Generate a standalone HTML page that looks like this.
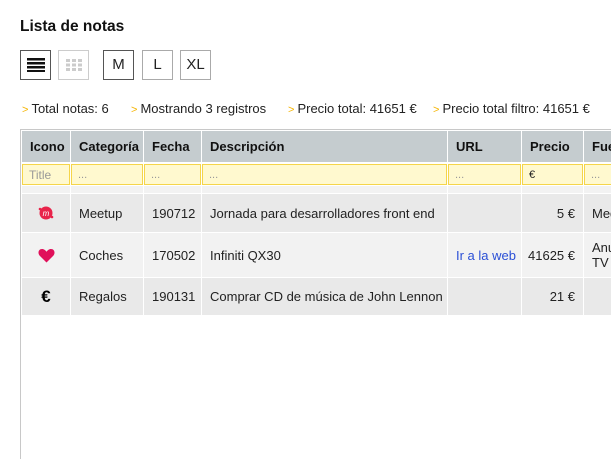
<!DOCTYPE html>
<html><head><meta charset="utf-8"><style>
*{box-sizing:border-box;margin:0;padding:0}
html,body{width:611px;height:459px;overflow:hidden}
body{background:#fff;font-family:"Liberation Sans",sans-serif;font-size:13px;color:#222;position:relative}
h1{position:absolute;left:20px;top:18px;font-size:15.5px;font-weight:bold;color:#111}
.btn{position:absolute;top:50px;width:31px;height:30px;border:1px solid #555;text-align:center;line-height:28px;font-size:15px;color:#222;background:#fff}
.stats{position:absolute;top:101px;left:22px;white-space:nowrap;font-size:13px}
.stats span{position:absolute;top:0}.stats b{color:#f5b400;font-weight:normal;font-size:11px;margin-right:3px}
.frame{position:absolute;left:20px;top:129px;width:620px;height:340px;border:1px solid #c8c8c8;border-right:none;border-bottom:none}
.c{position:absolute;display:flex;align-items:center;padding-left:8px;white-space:nowrap;overflow:hidden}
.h{background:#c5cccf;font-weight:bold;top:131px;height:31px;color:#111}
.f{background:#fff9cf;border:1px solid #f5d54a;top:164px;height:21px;font-size:11px;color:#999;padding-left:6px}
.s{background:#f2f2f2;top:186px;height:7px}
.r1{top:194px;height:38px;background:#e9e9e9}
.r2{top:233px;height:44px;background:#f2f2f2}
.r3{top:278px;height:37px;background:#e9e9e9}
.ctr{justify-content:center;padding:0}
.rt{justify-content:flex-end;padding-right:8px}
</style></head><body>
<h1>Lista de notas</h1>
<div class="btn" style="left:20px"><svg width="18" height="14" style="margin-top:7px"><rect y="0" width="18" height="2.5" fill="#111"/><rect y="4" width="18" height="2.5" fill="#111"/><rect y="8" width="18" height="2.5" fill="#111"/><rect y="12" width="18" height="2" fill="#111"/></svg></div>
<div class="btn" style="left:58px;border-color:#ccc"><svg width="16" height="12" style="margin-top:8px" fill="#ccc"><rect x="0" y="0" width="4" height="3"/><rect x="6" y="0" width="4" height="3"/><rect x="12" y="0" width="4" height="3"/><rect x="0" y="4.5" width="4" height="3"/><rect x="6" y="4.5" width="4" height="3"/><rect x="12" y="4.5" width="4" height="3"/><rect x="0" y="9" width="4" height="3"/><rect x="6" y="9" width="4" height="3"/><rect x="12" y="9" width="4" height="3"/></svg></div>
<div class="btn" style="left:103px">M</div>
<div class="btn" style="left:142px;border-color:#aaa">L</div>
<div class="btn" style="left:180px;border-color:#aaa">XL</div>
<div class="stats"><span style="left:0"><b>&gt;</b>Total notas: 6</span><span style="left:109px"><b>&gt;</b>Mostrando 3 registros</span><span style="left:266px"><b>&gt;</b>Precio total: 41651 €</span><span style="left:411px"><b>&gt;</b>Precio total filtro: 41651 €</span></div>
<div class="frame"></div>
<div class="c h" style="left:22px;width:48px">Icono</div>
<div class="c h" style="left:71px;width:72px">Categoría</div>
<div class="c h" style="left:144px;width:57px">Fecha</div>
<div class="c h" style="left:202px;width:245px">Descripción</div>
<div class="c h" style="left:448px;width:73px">URL</div>
<div class="c h" style="left:522px;width:61px">Precio</div>
<div class="c h" style="left:584px;width:40px">Fue</div>
<div class="c f" style="left:22px;width:48px;font-size:12px">Title</div>
<div class="c f" style="left:71px;width:72px">...</div>
<div class="c f" style="left:144px;width:57px">...</div>
<div class="c f" style="left:202px;width:245px">...</div>
<div class="c f" style="left:448px;width:73px">...</div>
<div class="c f" style="left:522px;width:61px;color:#222">€</div>
<div class="c f" style="left:584px;width:40px">...</div>
<div class="c s" style="left:22px;width:48px"></div><div class="c s" style="left:71px;width:72px"></div><div class="c s" style="left:144px;width:57px"></div><div class="c s" style="left:202px;width:245px"></div><div class="c s" style="left:448px;width:73px"></div><div class="c s" style="left:522px;width:61px"></div><div class="c s" style="left:584px;width:40px"></div>
<div class="c r1 ctr" style="left:22px;width:48px"><svg width="16" height="16"><circle cx="8" cy="8" r="6.5" fill="#e8234a"/><circle cx="2" cy="4" r="1.3" fill="#e8234a"/><circle cx="14" cy="12" r="1.3" fill="#e8234a"/><text x="8" y="11" font-size="8" fill="#fff" text-anchor="middle" font-style="italic">m</text></svg></div>
<div class="c r1" style="left:71px;width:72px">Meetup</div>
<div class="c r1" style="left:144px;width:57px">190712</div>
<div class="c r1" style="left:202px;width:245px">Jornada para desarrolladores front end</div>
<div class="c r1" style="left:448px;width:73px"></div>
<div class="c r1 rt" style="left:522px;width:61px">5 €</div>
<div class="c r1" style="left:584px;width:40px">Med</div>
<div class="c r2 ctr" style="left:22px;width:48px"><svg width="17" height="15" viewBox="0 0 17 15"><path d="M8.5 14.5 L1.5 7.5 C-0.5 5 0.5 1 4 1 C6 1 7.5 2.3 8.5 3.8 C9.5 2.3 11 1 13 1 C16.5 1 17.5 5 15.5 7.5 Z" fill="#e0105a"/></svg></div>
<div class="c r2" style="left:71px;width:72px">Coches</div>
<div class="c r2" style="left:144px;width:57px">170502</div>
<div class="c r2" style="left:202px;width:245px">Infiniti QX30</div>
<div class="c r2" style="left:448px;width:73px;color:#2a4fd6">Ir a la web</div>
<div class="c r2 rt" style="left:522px;width:61px;padding-left:4px">41625 €</div>
<div class="c r2" style="left:584px;width:40px;line-height:15px;white-space:normal">Anu<br>TV</div>
<div class="c r3 ctr" style="left:22px;width:48px;font-weight:bold;font-size:17px;color:#000">€</div>
<div class="c r3" style="left:71px;width:72px">Regalos</div>
<div class="c r3" style="left:144px;width:57px">190131</div>
<div class="c r3" style="left:202px;width:245px">Comprar CD de música de John Lennon</div>
<div class="c r3" style="left:448px;width:73px"></div>
<div class="c r3 rt" style="left:522px;width:61px">21 €</div>
<div class="c r3" style="left:584px;width:40px"></div>
</body></html>
